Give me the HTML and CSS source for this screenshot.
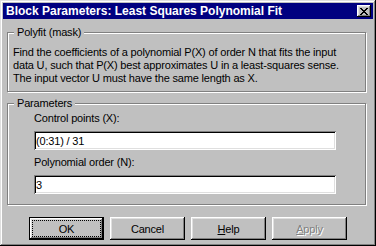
FILE: index.html
```html
<!DOCTYPE html>
<html lang="en">
  <head>
    <meta charset="UTF-8" />
    <meta name="viewport" content="width=device-width, initial-scale=1.0" />
    <title>Block Parameters: Least Squares Polynomial Fit</title>

    <link rel="stylesheet" href="styles.css">
  </head>
  <body>
    <div class="dialog">
      <div class="title-bar">
        <p class="title">Block Parameters: Least Squares Polynomial Fit</p>
        <button class="close-btn" aria-label="Close">
          <svg width="8" height="7" viewBox="0 0 8 7" shape-rendering="crispEdges">
            <path fill="#000" d="M0 0h2v1h-2z M6 0h2v1h-2z M1 1h2v1h-2z M5 1h2v1h-2z M2 2h4v1h-4z M3 3h2v1h-2z M2 4h4v1h-4z M1 5h2v1h-2z M5 5h2v1h-2z M0 6h2v1h-2z M6 6h2v1h-2z" />
          </svg>
        </button>
      </div>

      <div class="dialog-body">
        <fieldset class="group group-mask">
          <legend>Polyfit (mask)</legend>
          <p class="description">
            Find the coefficients of a polynomial P(X) of order N that fits the input
            data U, such that P(X) best approximates U in a least-squares sense.
            The input vector U must have the same length as X.
          </p>
        </fieldset>

        <fieldset class="group group-params">
          <legend>Parameters</legend>
          <div class="fields">
            <label class="field-label" for="control_points">Control points (X):</label>
            <input class="field-input" id="control_points" type="text" value="(0:31) / 31" />
            <label class="field-label" for="poly_order">Polynomial order (N):</label>
            <input class="field-input" id="poly_order" type="text" value="3" />
          </div>
        </fieldset>

        <div class="buttons">
          <button class="btn btn-default">OK</button>
          <button class="btn">Cancel</button>
          <button class="btn"><u>H</u>elp</button>
          <button class="btn" disabled><u>A</u>pply</button>
        </div>
      </div>
    </div>
  </body>
</html>
```

FILE: styles.css
```css
body {
    margin: 0;
    background-color: #c0c0c0;
    font-family: "Liberation Sans", Arial, sans-serif;
    font-size: 11px;
    letter-spacing: -0.17px;
    color: #000;
}

.dialog {
    width: 376px;
    height: 246px;
    box-sizing: border-box;
    padding: 3px;
    background: #c0c0c0;
    box-shadow: inset -1px -1px #000, inset 1px 1px #dfdfdf,
        inset -2px -2px #808080, inset 2px 2px #fff;
}

/* title bar */

.title-bar {
    height: 16px;
    background: #000080;
    display: flex;
    align-items: center;
    justify-content: space-between;
    padding: 0 2px 0 3px;
}

.title {
    margin: 0;
    color: #fff;
    font-weight: bold;
    font-size: 12px;
    letter-spacing: 0;
    line-height: 16px;
}

.close-btn {
    width: 14px;
    height: 12px;
    padding: 0;
    border: none;
    background: #c0c0c0;
    display: flex;
    align-items: center;
    justify-content: center;
    box-shadow: inset -1px -1px #000, inset 1px 1px #fff,
        inset -2px -2px #808080, inset 2px 2px #dfdfdf;
}

.close-btn svg {
    display: block;
}

/* group boxes */

.dialog-body {
    padding: 0 4px;
    display: flex;
    flex-direction: column;
}

.group {
    width: 359px;
    box-sizing: border-box;
    margin: 0;
    border: 1px solid #808080;
    box-shadow: inset 1px 1px #fff, 1px 1px #fff;
    padding: 7px 12px 6px 5px;
    min-inline-size: 0;
}

.group legend {
    margin-left: 1px;
    padding: 0 3px;
    line-height: 13px;
    background: #c0c0c0;
}

.group-mask {
    margin-top: 7px;
}

.group-params {
    margin-top: 5px;
    padding-top: 2px;
    padding-bottom: 10px;
}

.description {
    margin: 0;
    line-height: 13px;
}

.fields {
    padding-left: 21px;
    display: flex;
    flex-direction: column;
    align-items: flex-start;
}

.field-label {
    display: block;
    line-height: 13px;
}

.field-input {
    display: block;
    width: 302px;
    height: 19px;
    box-sizing: border-box;
    margin: 6px 0;
    padding: 0 2px;
    border: none;
    outline: none;
    background: #fff;
    font: inherit;
    letter-spacing: inherit;
    color: #000;
    box-shadow: inset 1px 1px #808080, inset -1px -1px #fff,
        inset 2px 2px #000, inset -2px -2px #dfdfdf;
}

.field-input:last-child {
    margin-bottom: 0;
}

/* buttons */

.buttons {
    display: flex;
    gap: 6px;
    margin-top: 12px;
    padding-left: 22px;
}

.btn {
    width: 75px;
    height: 23px;
    padding: 0;
    border: none;
    background: #c0c0c0;
    font: inherit;
    letter-spacing: inherit;
    color: #000;
    box-shadow: inset -1px -1px #000, inset 1px 1px #fff,
        inset -2px -2px #808080, inset 2px 2px #dfdfdf;
}

.btn-default {
    border: 1px solid #000;
    outline: 1px dotted #000;
    outline-offset: -4px;
}

.btn:disabled {
    color: #808080;
    text-shadow: 1px 1px 0 #fff;
}
```
